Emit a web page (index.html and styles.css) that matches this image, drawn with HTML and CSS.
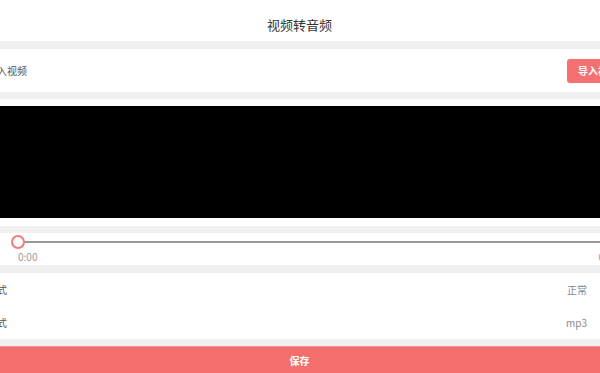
FILE: index.html
```html
<!DOCTYPE html>
<html lang="zh">
<head>
<meta charset="utf-8">
<link rel="stylesheet" href="styles.css">
</head>
<body>
<div class="page">
  <header class="title">视频转音频</header>
  <div class="gap"></div>
  <section class="row import-row">
    <span class="label">导入视频</span>
    <button class="btn">导入视频</button>
  </section>
  <div class="gap thin"></div>
  <section class="video-box">
    <div class="video"></div>
  </section>
  <div class="gap thin"></div>
  <section class="slider-box">
    <div class="track">
      <span class="thumb"></span>
    </div>
    <div class="times">
      <span>0:00</span>
      <span>0:00</span>
    </div>
  </section>
  <div class="gap"></div>
  <section class="settings">
    <div class="row setting"><span class="label">模式</span><span class="value">正常</span></div>
    <div class="row setting"><span class="label">格式</span><span class="value">mp3</span></div>
  </section>
  <div class="gap thin"></div>
  <button class="save">保存</button>
</div>
</body>
</html>
```

FILE: styles.css
```css
html, body {
  margin: 0;
  padding: 0;
  overflow: hidden;
  background: #fff;
}
body {
  font-family: "Noto Sans CJK SC", "Noto Sans", "Liberation Sans", sans-serif;
  color: #555;
}
.page {
  width: 660px;
  margin-left: -25px;
  display: flex;
  flex-direction: column;
}
.title {
  height: 41px;
  box-sizing: border-box;
  padding-top: 16px;
  padding-right: 11px;
  text-align: center;
  font-size: 13px;
  line-height: 18px;
  color: #333;
}
.gap {
  height: 8px;
  background: #f0f0f0;
}
.gap.thin {
  height: 7px;
}
.row {
  display: flex;
  align-items: center;
  justify-content: space-between;
  padding-left: 12px;
}
.import-row {
  height: 43px;
  padding-right: 6px;
}
.label {
  font-size: 10px;
  color: #555;
}
.btn {
  height: 24px;
  border: none;
  border-radius: 3px;
  background: #f47171;
  color: #fff;
  font-family: inherit;
  font-size: 10px;
  font-weight: bold;
  padding: 0 11px;
}
.video-box {
  padding: 7px 0 8px;
}
.video {
  height: 112px;
  background: #000;
}
.slider-box {
  height: 32px;
  box-sizing: border-box;
  padding: 8px 17px 0 36px;
}
.track {
  position: relative;
  height: 2px;
  margin-left: 3px;
  background: #999;
}
.thumb {
  position: absolute;
  left: -3px;
  top: -6px;
  width: 10px;
  height: 10px;
  border: 2px solid #f47a7a;
  border-radius: 50%;
  background: #fff;
}
.times {
  display: flex;
  justify-content: space-between;
  padding-left: 7px;
  margin-top: 7px;
  font-size: 10px;
  line-height: 14px;
  color: #999;
}
.settings {
  display: flex;
  flex-direction: column;
}
.setting {
  height: 33px;
  padding-right: 48px;
}
.value {
  font-size: 10px;
  color: #888;
}
.save {
  height: 28px;
  border: none;
  border-top: 1px solid #f69090;
  background: #f46e6e;
  color: #fff;
  font-family: inherit;
  font-size: 10px;
  font-weight: bold;
  padding: 0 11px 0 0;
}
```
